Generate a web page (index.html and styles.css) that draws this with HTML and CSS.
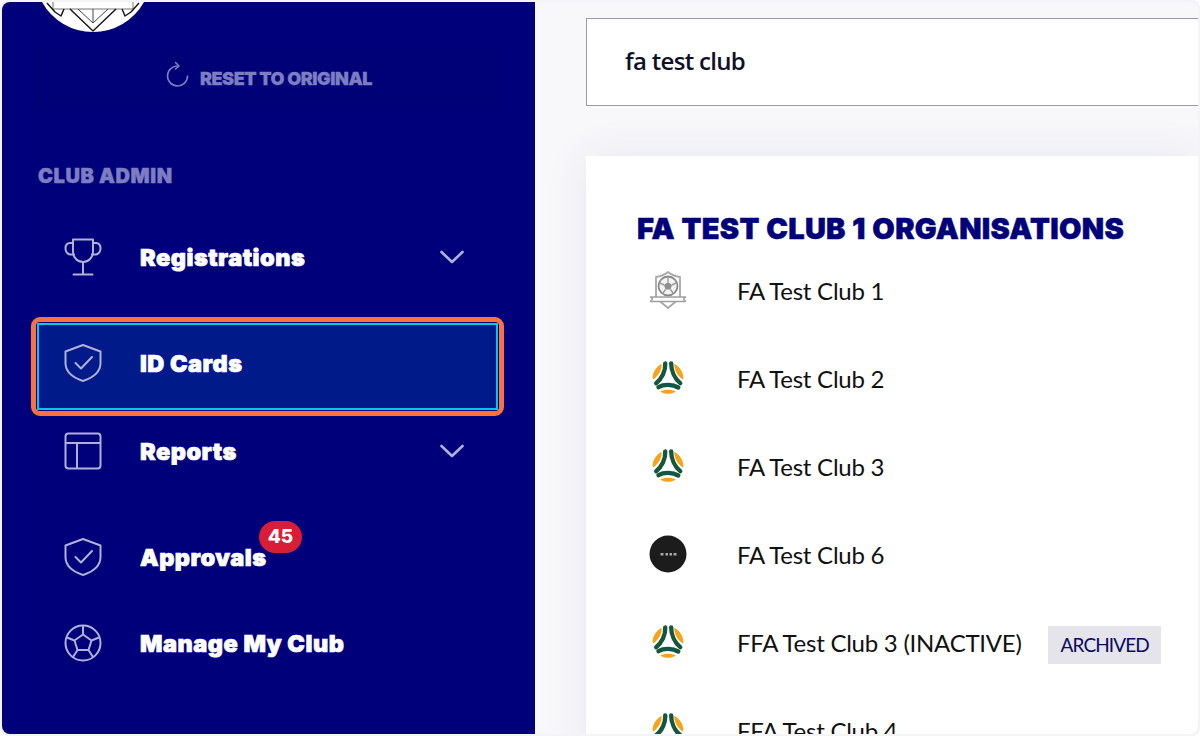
FILE: index.html
```html
<!DOCTYPE html>
<html lang="en">
<head>
<meta charset="utf-8">
<title>FA Test Club 1 Organisations</title>
<link rel="stylesheet" href="styles.css">
</head>
<body>
<svg class="defs" width="0" height="0" aria-hidden="true">
  <defs>
    <symbol id="ball" viewBox="-4 -5 48 48">
      <path d="M0.500 19C1 11 5 5 12 1C12.500 9 8 16 1.500 21zM39.500 19C39 11 35 5 28 1C27.500 9 32 16 38.500 21zM10 36C16 33 24 33 30 36C24 40 16 40 10 36z" fill="#f5a31a"/>
      <g fill="none" stroke="#14573c" stroke-width="5.500" stroke-linecap="round">
        <path d="M16.500 0.500C17 10 12.500 20 5 25.500"/>
        <path d="M24 0.500C24 10 28.500 20 35.500 25.500"/>
        <path d="M8 30.500C15 26.500 26 27 33 31"/>
      </g>
    </symbol>
    <symbol id="shield" viewBox="0 0 38 38">
      <path d="M19 1 36.500 7.500V19c0 8.500-7 14.500-17.500 18C8.500 33.500 1.500 27.500 1.500 19V7.500z" fill="none" stroke="currentColor" stroke-width="2" stroke-linejoin="round"/>
      <path d="M11.500 19 17 24.500 28 13" fill="none" stroke="currentColor" stroke-width="2" stroke-linecap="round" stroke-linejoin="round"/>
    </symbol>
    <symbol id="chev" viewBox="0 0 24 14">
      <path d="M1.500 2 12 12 22.500 2" fill="none" stroke="currentColor" stroke-width="2.600" stroke-linecap="round" stroke-linejoin="round"/>
    </symbol>
  </defs>
</svg>
<div class="window">
  <aside class="sidebar">
    <div class="logo">
      <svg class="logo-mark" viewBox="0 0 102 31" aria-hidden="true">
        <path d="M0 0A58.350 58.350 0 0 0 102 0z" fill="#fff"/>
        <path d="M11 0V7H91V0" fill="none" stroke="#777" stroke-width="1"/>
        <path d="M5 1 13 10 19 14 22 7M97 1 89 10 83 14 80 7M28 7 51 29 74 7" fill="none" stroke="#1a1a1a" stroke-width="1.500" stroke-linejoin="round"/>
        <path d="M36 7 51 21 66 7M51 7V21" fill="none" stroke="#444" stroke-width="1"/>
      </svg>
    </div>
    <button class="reset" type="button">
      <svg class="reset-icon" viewBox="0 0 24 26" aria-hidden="true">
        <path d="M12 5A10 10 0 1 0 21.500 15" fill="none" stroke="currentColor" stroke-width="1.600" stroke-linecap="round"/>
        <path d="M9.500 1.500 13 5 9.500 8" fill="none" stroke="currentColor" stroke-width="1.600" stroke-linecap="round" stroke-linejoin="round"/>
      </svg>
      <span>RESET TO ORIGINAL</span>
    </button>
    <h2 class="section-label">CLUB ADMIN</h2>
    <nav class="nav">
      <a class="nav-item nav-reg">
        <svg class="nav-icon" viewBox="0 0 38 38" aria-hidden="true">
          <path d="M9 1.500h20v12c0 6-4.500 10.500-10 10.500S9 19.500 9 13.500z" fill="none" stroke="currentColor" stroke-width="2" stroke-linejoin="round"/>
          <path d="M9 5H6C3 5 1.500 7.500 1.500 10.500S3.500 16.500 6.500 16.500H10M29 5h3c3 0 4.500 2.500 4.500 5.500s-2 6-5 6H28M19 24v12.500M9.500 36.500h19" fill="none" stroke="currentColor" stroke-width="2" stroke-linecap="round"/>
        </svg>
        <span class="nav-text">Registrations</span>
        <svg class="chev" aria-hidden="true"><use href="#chev"/></svg>
      </a>
      <a class="nav-item nav-id is-focused">
        <svg class="nav-icon" aria-hidden="true"><use href="#shield"/></svg>
        <span class="nav-text">ID Cards</span>
      </a>
      <a class="nav-item nav-rep">
        <svg class="nav-icon" viewBox="0 0 38 38" aria-hidden="true">
          <rect x="1.500" y="1.500" width="35" height="35" rx="3" fill="none" stroke="currentColor" stroke-width="2"/>
          <path d="M1.500 11h35M13 11v25.500" fill="none" stroke="currentColor" stroke-width="2"/>
        </svg>
        <span class="nav-text">Reports</span>
        <svg class="chev" aria-hidden="true"><use href="#chev"/></svg>
      </a>
      <a class="nav-item nav-app">
        <svg class="nav-icon" aria-hidden="true"><use href="#shield"/></svg>
        <span class="nav-text nav-text-badged">Approvals<span class="badge">45</span></span>
      </a>
      <a class="nav-item nav-man">
        <svg class="nav-icon" viewBox="0 0 38 38" aria-hidden="true">
          <circle cx="19" cy="19" r="17.500" fill="none" stroke="currentColor" stroke-width="2"/>
          <path d="M19 10.500 27.500 16.500 24.500 26H13.500L10.500 16.500zM19 10.500V2M27.500 16.500l7.500-3M24.500 26l4.500 7M13.500 26l-4.500 7M10.500 16.500l-7.500-3" fill="none" stroke="currentColor" stroke-width="2" stroke-linejoin="round"/>
        </svg>
        <span class="nav-text">Manage My Club</span>
      </a>
    </nav>
  </aside>
  <main class="main">
    <div class="search">fa test club</div>
    <section class="card">
      <h1 class="card-title">FA TEST CLUB 1 ORGANISATIONS</h1>
      <ul class="org-list">
        <li class="org">
          <svg class="org-logo" viewBox="0 0 38 38" aria-hidden="true">
            <path d="M7 6Q14 5 19 1Q24 5 31 6V27L19 37 7 27z" fill="#fff" stroke="#a8a8a8" stroke-width="1.800" stroke-linejoin="round"/>
            <circle cx="19" cy="15" r="9.500" fill="#f4f4f4" stroke="#8a8a8a" stroke-width="1.800"/>
            <path d="M19 11 23 14 21.500 18.500H16.500L15 14z" fill="#8f8f8f"/>
            <path d="M19 11V6M23 14l4-2M21.500 18.500l2.500 3.500M16.500 18.500 14 22M15 14l-4-2" stroke="#9a9a9a" stroke-width="1.400" fill="none"/>
            <path d="M1.500 26h35l-2 2 2 2.500h-35l2-2.500z" fill="#fff" stroke="#a0a0a0" stroke-width="1.500" stroke-linejoin="round"/>
          </svg>
          <span>FA Test Club 1</span>
        </li>
        <li class="org"><svg class="org-logo" aria-hidden="true"><use href="#ball"/></svg><span>FA Test Club 2</span></li>
        <li class="org"><svg class="org-logo" aria-hidden="true"><use href="#ball"/></svg><span>FA Test Club 3</span></li>
        <li class="org">
          <svg class="org-logo" viewBox="0 0 38 38" aria-hidden="true">
            <circle cx="19" cy="19" r="18.500" fill="#1c1c1c"/>
            <path d="M11.500 18h3v2.500h-3zM16.500 18h2.500v2.500h-2.500zM20.500 18h2.500v2.500h-2.500zM24.500 18h3v2.500h-3z" fill="#a5a5a5"/>
          </svg>
          <span>FA Test Club 6</span>
        </li>
        <li class="org"><svg class="org-logo" aria-hidden="true"><use href="#ball"/></svg><span>FFA Test Club 3 (INACTIVE)</span><span class="tag">ARCHIVED</span></li>
        <li class="org"><svg class="org-logo" aria-hidden="true"><use href="#ball"/></svg><span>FFA Test Club 4</span></li>
      </ul>
    </section>
  </main>
</div>
</body>
</html>
```
FILE: styles.css
```css
* { box-sizing: border-box; }
html, body { margin: 0; height: 100%; overflow: hidden; background: #fff; }
body { font-family: "Lato", "Liberation Sans", sans-serif; }
.defs { position: absolute; }
.window { display: flex; width: 1200px; height: 736px; padding: 2px; background: #f3f3f8; border-radius: 8px; }
.sidebar {
  width: 533px; flex: none; height: 732px; overflow: hidden;
  background: #00007a; border-radius: 8px 0 0 8px; color: #fff;
  padding: 0 0 0 34px;
}
.logo { height: 44px; padding-left: 6px; }
.logo-mark { display: block; width: 102px; height: 31px; }
.reset {
  display: flex; align-items: center; justify-content: center; gap: 10px;
  width: 466px; height: 63px; padding: 2px 0 0; border: 0; margin: 0;
  background: #000077; color: #7d7dc2; font: 900 18px/1 "Inter", sans-serif; letter-spacing: -0.45px;
  -webkit-text-stroke: 0.3px #7d7dc2;
}
.reset-icon { width: 24px; height: 26px; margin-top: -10px; }
.section-label {
  margin: 55px 0 0 2px; font: 900 20px/24px "Inter", sans-serif; color: #7d7dc2;
  letter-spacing: 0.6px; -webkit-text-stroke: 0.5px #7d7dc2;
}
.nav { display: flex; flex-direction: column; margin-top: 25px; }
.nav-item { display: flex; align-items: center; width: 457px; padding-left: 25px; position: relative; margin-left: 3px; }
.nav-reg { height: 88px; }
.nav-id { height: 83px; margin-top: 24px; padding-bottom: 7px; }
.nav-rep { height: 86px; }
.nav-app { height: 86px; margin-top: 20px; }
.nav-man { height: 86px; }
.nav-icon { width: 38px; height: 38px; flex: none; color: #b0b0d8; }
.nav-text {
  margin: 2px 0 0 38px; font: 900 23.500px/1 "Inter", sans-serif; color: #fff;
  letter-spacing: 0.5px; -webkit-text-stroke: 0.7px #fff;
}
.chev { width: 24px; height: 14px; color: #b0b0d8; position: absolute; right: 32px; top: 37px; }
.nav-rep .chev { top: 36px; }
.is-focused { background: #001a8a; box-shadow: 0 0 0 2px #00c8e8, 0 0 0 3px #00007a; }
.is-focused::before {
  content: ""; position: absolute; inset: -8px; border: 5px solid #ff7040; border-radius: 9px;
}
.nav-text-badged { position: relative; }
.badge {
  position: absolute; left: 119px; top: -25px; width: 43px; height: 32px;
  border-radius: 16px; background: #d81e36; color: #fff; font: 800 19px/32px "Inter", sans-serif;
  text-align: center; letter-spacing: 0; -webkit-text-stroke: 0;
}
.main { flex: 1; min-width: 0; height: 732px; overflow: hidden; background: #f8f8fb; border-radius: 0 8px 8px 0; padding: 16px 0 0 51px; }
.search {
  height: 88px; margin-right: -8px; border: 1px solid #9b9ba3; background: #fff;
  padding-left: 38px; font: 600 24px/84px "Open Sans", "Lato", sans-serif; color: #101028; letter-spacing: -0.7px;
}
.card { margin-top: 50px; height: 600px; background: #fff; padding: 55px 0 0 51px; box-shadow: 0 0 40px rgba(40, 40, 120, 0.09); }
.card-title { margin: 0; font: 900 29px/36px "Inter", sans-serif; color: #00007a; letter-spacing: 0.3px; -webkit-text-stroke: 0.5px #00007a; word-spacing: 0.5px; }
.org-list { list-style: none; margin: 6px 0 0; padding: 0; }
.org { display: flex; align-items: center; height: 88px; font-size: 24px; color: #111; letter-spacing: -0.25px; }
.org:first-child { margin-top: -7px; }
.org-logo { width: 38px; height: 38px; margin: 0 50px 0 12px; flex: none; }
.tag {
  margin: 5px 0 0 26px; height: 38px; padding: 0 12px 0 13px; background: #e4e4ea; color: #0a0a60;
  font-size: 19px; line-height: 38px; letter-spacing: -0.9px;
}
```
